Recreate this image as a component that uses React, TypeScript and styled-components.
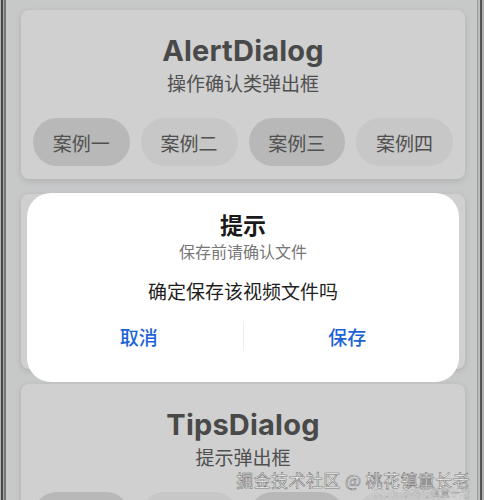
import React from 'react';
import styled, { createGlobalStyle } from 'styled-components';

const GlobalStyle = createGlobalStyle`
  html, body {
    margin: 0;
    padding: 0;
    background: #c6c6c6;
  }
  * {
    box-sizing: border-box;
  }
`;

const FONT = `Inter, "Noto Sans CJK SC", sans-serif`;

interface CaseGroup {
  title: string;
  desc: string;
  cases: string[];
  bottom: number;
}

const GROUPS: CaseGroup[] = [
  { title: 'AlertDialog', desc: '操作确认类弹出框', cases: ['案例一', '案例二', '案例三', '案例四'], bottom: 13 },
  { title: 'ConfirmDialog', desc: '带勾选框的弹出框', cases: ['案例一', '案例二', '案例三', '案例四'], bottom: 19 },
  { title: 'TipsDialog', desc: '提示弹出框', cases: ['案例一', '案例二', '案例三', '案例四'], bottom: 13 },
];

const Screen = styled.div`
  position: relative;
  width: 484px;
  height: 500px;
  overflow: hidden;
  background: #f4f5f6;
  font-family: ${FONT};
`;

// thin bezel lines down both sides of the device
const Frame = styled.div`
  position: absolute;
  inset: 0;
  pointer-events: none;
  z-index: 5;
  box-shadow:
    inset 1px 0 0 #b4b4b4,
    inset 3px 0 0 #4a4a4a,
    inset 4px 0 0 #a8a8a8,
    inset 6px 0 0 #777,
    inset -2px 0 0 #b0b0b0,
    inset -4px 0 0 #555,
    inset -6px 0 0 #bdbdbd,
    inset -7px 0 0 #9a9a9a;
`;

const List = styled.div`
  display: flex;
  flex-direction: column;
  gap: 15px;
  padding: 10px 19px 0 21px;
`;

const Card = styled.section<{ $bottom: number }>`
  background: #ffffff;
  border-radius: 8px;
  box-shadow: 0 2px 6px rgba(0, 0, 0, 0.12);
  padding: 23px 12px ${p => p.$bottom}px;
  display: flex;
  flex-direction: column;
  align-items: center;
`;

const Title = styled.h2`
  margin: 0;
  font-size: 29px;
  line-height: 36px;
  font-weight: 700;
  color: #5a5a5a;
  letter-spacing: 0.2px;
`;

const Desc = styled.div`
  margin-top: 3px;
  font-size: 19px;
  line-height: 26px;
  color: #626262;
`;

const CaseRow = styled.div`
  margin-top: 20px;
  align-self: stretch;
  display: flex;
  gap: 11px;
`;

const CaseButton = styled.button<{ $shade: boolean }>`
  flex: 1;
  height: 48px;
  border: none;
  border-radius: 24px;
  background: ${p => (p.$shade ? '#e2e2e2' : '#f4f4f4')};
  color: #626262;
  font-family: ${FONT};
  font-size: 19px;
  padding: 0;
`;

const Mask = styled.div`
  position: absolute;
  inset: 0;
  background: rgba(0, 0, 0, 0.185);
  z-index: 2;
`;

const Dialog = styled.div`
  position: absolute;
  left: 27px;
  top: 193px;
  width: 432px;
  height: 189px;
  z-index: 3;
  background: #fff;
  border-radius: 24px;
  display: flex;
  flex-direction: column;
  align-items: center;
  padding-top: 18px;
`;

const DialogTitle = styled.div`
  font-size: 23px;
  line-height: 30px;
  font-weight: 700;
  color: #1a1a1a;
`;

const DialogSub = styled.div`
  font-size: 16px;
  line-height: 22px;
  color: #777;
`;

const DialogMessage = styled.div`
  margin-top: 17px;
  font-size: 19px;
  line-height: 26px;
  color: #1e1e1e;
`;

const ActionBar = styled.div`
  margin-top: 10px;
  align-self: stretch;
  display: flex;
  align-items: center;
  padding: 0 8px;
`;

const Action = styled.button`
  flex: 1;
  height: 40px;
  border: none;
  background: none;
  color: #1d63d8;
  font-family: ${FONT};
  font-size: 19px;
  font-weight: 500;
  padding: 0;
`;

const ActionDivider = styled.div`
  width: 1px;
  height: 30px;
  background: #efefef;
`;

const Watermark = styled.div`
  position: absolute;
  right: 14px;
  bottom: 2px;
  z-index: 6;
  display: flex;
  flex-direction: column;
  align-items: flex-end;
  font-family: "Noto Sans CJK SC", sans-serif;
  color: #fff;
  line-height: 1;
`;

const MarkMain = styled.div`
  font-size: 17px;
  letter-spacing: 0.4px;
  -webkit-text-stroke: 0.6px #777;
`;

const MarkSub = styled.div`
  font-size: 10px;
  color: #f6f6f6;
  -webkit-text-stroke: 0.3px #999;
`;

export default function App() {
  return (
    <>
      <GlobalStyle />
      <Screen>
        <List>
          {GROUPS.map(g => (
            <Card key={g.title} $bottom={g.bottom}>
              <Title>{g.title}</Title>
              <Desc>{g.desc}</Desc>
              <CaseRow>
                {g.cases.map((c, i) => (
                  <CaseButton key={c} $shade={i % 2 === 0}>
                    {c}
                  </CaseButton>
                ))}
              </CaseRow>
            </Card>
          ))}
        </List>
        <Mask />
        <Dialog>
          <DialogTitle>提示</DialogTitle>
          <DialogSub>保存前请确认文件</DialogSub>
          <DialogMessage>确定保存该视频文件吗</DialogMessage>
          <ActionBar>
            <Action>取消</Action>
            <ActionDivider />
            <Action>保存</Action>
          </ActionBar>
        </Dialog>
        <Frame />
        <Watermark>
          <MarkMain>掘金技术社区 @ 桃花镇童长老</MarkMain>
          <MarkSub>CSDN @桃花镇童长老</MarkSub>
        </Watermark>
      </Screen>
    </>
  );
}
